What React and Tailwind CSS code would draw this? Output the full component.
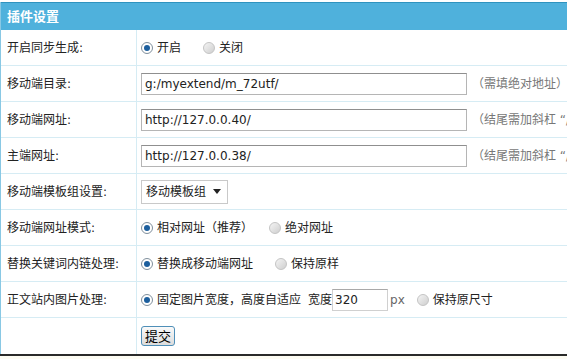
const font = { fontFamily: '"DejaVu Sans", "Noto Sans CJK SC", sans-serif' }

function Radio({ checked, label }) {
  return (
    <label className="flex items-center gap-[4px]">
      <span
        className={
          'flex h-[12px] w-[12px] items-center justify-center rounded-full border ' +
          (checked
            ? 'border-[#7f8f9c] bg-white'
            : 'border-[#c4c4c4] bg-gradient-to-br from-[#f4f4f4] to-[#cfcfcf]')
        }
      >
        {checked && <span className="h-[6px] w-[6px] rounded-full bg-[#1d5f9e]" />}
      </span>
      <span>{label}</span>
    </label>
  )
}

function Row({ label, children }) {
  return (
    <div className="flex h-[36px] border-b border-[#d6ecf4]">
      <div className="flex w-[136px] shrink-0 items-center border-r border-[#d6ecf4] pl-[6px]">{label}</div>
      <div className="flex min-w-0 flex-1 items-center whitespace-nowrap pl-[4px]">{children}</div>
    </div>
  )
}

function TextInput({ value, hint }) {
  return (
    <>
      <div className="flex h-[22px] w-[326px] shrink-0 items-center border border-[#b5b5b5] border-t-[#8f8f8f] bg-white pl-[3px] text-[12px] text-[#222]">
        {value}
      </div>
      <span className="ml-[5px] text-[12px] text-[#777]">{hint}</span>
    </>
  )
}

export default function App() {
  return (
    <div className="h-[359px] w-[567px] overflow-hidden bg-white pt-[2px] text-[12px] text-[#222]" style={font}>
      <div className="border-l border-[#89c8e4]">
        <div className="flex h-[28px] items-center border-t border-[#2f93bf] bg-[#4fb1dc] pl-[6px] text-[13px] font-bold text-white">
          插件设置
        </div>
        <Row label="开启同步生成:">
          <div className="flex gap-[22px]">
            <Radio checked label="开启" />
            <Radio label="关闭" />
          </div>
        </Row>
        <Row label="移动端目录:">
          <TextInput value="g:/myextend/m_72utf/" hint="（需填绝对地址）" />
        </Row>
        <Row label="移动端网址:">
          <TextInput value="http://127.0.0.40/" hint="（结尾需加斜杠 “/”）" />
        </Row>
        <Row label="主端网址:">
          <TextInput value="http://127.0.0.38/" hint="（结尾需加斜杠 “/”）" />
        </Row>
        <Row label="移动端模板组设置:">
          <div className="flex h-[24px] w-[87px] items-center justify-between border border-[#c9c9c9] bg-white pl-[4px] pr-[6px] text-[12px]">
            <span>移动模板组</span>
            <svg width="8" height="5" viewBox="0 0 8 5">
              <path d="M0 0h8L4 5z" fill="#222" />
            </svg>
          </div>
        </Row>
        <Row label="移动端网址模式:">
          <div className="flex gap-[16px]">
            <Radio checked label="相对网址（推荐）" />
            <Radio label="绝对网址" />
          </div>
        </Row>
        <Row label="替换关键词内链处理:">
          <div className="flex gap-[22px]">
            <Radio checked label="替换成移动端网址" />
            <Radio label="保持原样" />
          </div>
        </Row>
        <Row label="正文站内图片处理:">
          <Radio checked label="固定图片宽度，高度自适应" />
          <span className="ml-[7px]">宽度</span>
          <div className="flex h-[22px] w-[56px] items-center border border-[#d0d0d0] border-t-[#a9a9a9] bg-white pl-[2px]">
            320
          </div>
          <span className="ml-[2px] text-[#666]">px</span>
          <span className="ml-[12px]">
            <Radio label="保持原尺寸" />
          </span>
        </Row>
        <div className="flex h-[36px]">
          <div className="w-[136px] shrink-0 border-r border-[#d6ecf4]" />
          <div className="flex items-center pl-[4px]">
            <button className="h-[20px] rounded-[3px] border border-[#4f8fb8] bg-gradient-to-b from-[#fafafa] to-[#dcdcdc] px-[3px] text-[13px] leading-none text-black">
              提交
            </button>
          </div>
        </div>
      </div>
      <div className="h-[2px] bg-[#2a2a2a]" />
      <div className="h-[3px] bg-[#fdfcf3]" />
    </div>
  )
}
